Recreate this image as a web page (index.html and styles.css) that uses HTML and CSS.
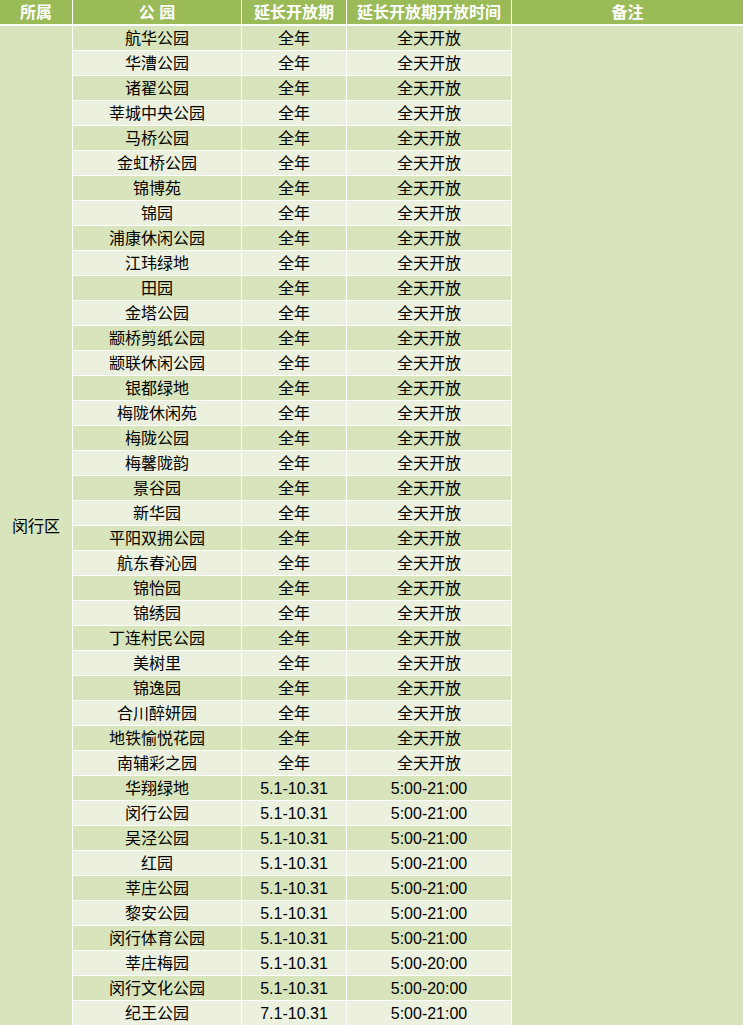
FILE: index.html
```html
<!DOCTYPE html>
<html lang="zh-CN">
<head>
<meta charset="utf-8">
<title>闵行区公园延长开放</title>
<link rel="stylesheet" href="styles.css">
</head>
<body>
<div class="table">
  <div class="th">所属</div>
  <div class="th">公&nbsp;园</div>
  <div class="th">延长开放期</div>
  <div class="th">延长开放期开放时间</div>
  <div class="th">备注</div>
  <div class="district">闵行区</div>
  <div class="note"></div>

  <div class="c d">航华公园</div><div class="c d">全年</div><div class="c d">全天开放</div>
  <div class="c l">华漕公园</div><div class="c l">全年</div><div class="c l">全天开放</div>
  <div class="c d">诸翟公园</div><div class="c d">全年</div><div class="c d">全天开放</div>
  <div class="c l">莘城中央公园</div><div class="c l">全年</div><div class="c l">全天开放</div>
  <div class="c d">马桥公园</div><div class="c d">全年</div><div class="c d">全天开放</div>
  <div class="c l">金虹桥公园</div><div class="c l">全年</div><div class="c l">全天开放</div>
  <div class="c d">锦博苑</div><div class="c d">全年</div><div class="c d">全天开放</div>
  <div class="c l">锦园</div><div class="c l">全年</div><div class="c l">全天开放</div>
  <div class="c d">浦康休闲公园</div><div class="c d">全年</div><div class="c d">全天开放</div>
  <div class="c l">江玮绿地</div><div class="c l">全年</div><div class="c l">全天开放</div>
  <div class="c d">田园</div><div class="c d">全年</div><div class="c d">全天开放</div>
  <div class="c l">金塔公园</div><div class="c l">全年</div><div class="c l">全天开放</div>
  <div class="c d">颛桥剪纸公园</div><div class="c d">全年</div><div class="c d">全天开放</div>
  <div class="c l">颛联休闲公园</div><div class="c l">全年</div><div class="c l">全天开放</div>
  <div class="c d">银都绿地</div><div class="c d">全年</div><div class="c d">全天开放</div>
  <div class="c l">梅陇休闲苑</div><div class="c l">全年</div><div class="c l">全天开放</div>
  <div class="c d">梅陇公园</div><div class="c d">全年</div><div class="c d">全天开放</div>
  <div class="c l">梅馨陇韵</div><div class="c l">全年</div><div class="c l">全天开放</div>
  <div class="c d">景谷园</div><div class="c d">全年</div><div class="c d">全天开放</div>
  <div class="c l">新华园</div><div class="c l">全年</div><div class="c l">全天开放</div>
  <div class="c d">平阳双拥公园</div><div class="c d">全年</div><div class="c d">全天开放</div>
  <div class="c l">航东春沁园</div><div class="c l">全年</div><div class="c l">全天开放</div>
  <div class="c d">锦怡园</div><div class="c d">全年</div><div class="c d">全天开放</div>
  <div class="c l">锦绣园</div><div class="c l">全年</div><div class="c l">全天开放</div>
  <div class="c d">丁连村民公园</div><div class="c d">全年</div><div class="c d">全天开放</div>
  <div class="c l">美树里</div><div class="c l">全年</div><div class="c l">全天开放</div>
  <div class="c d">锦逸园</div><div class="c d">全年</div><div class="c d">全天开放</div>
  <div class="c l">合川醉妍园</div><div class="c l">全年</div><div class="c l">全天开放</div>
  <div class="c d">地铁愉悦花园</div><div class="c d">全年</div><div class="c d">全天开放</div>
  <div class="c l">南辅彩之园</div><div class="c l">全年</div><div class="c l">全天开放</div>
  <div class="c d">华翔绿地</div><div class="c d">5.1-10.31</div><div class="c d">5:00-21:00</div>
  <div class="c l">闵行公园</div><div class="c l">5.1-10.31</div><div class="c l">5:00-21:00</div>
  <div class="c d">吴泾公园</div><div class="c d">5.1-10.31</div><div class="c d">5:00-21:00</div>
  <div class="c l">红园</div><div class="c l">5.1-10.31</div><div class="c l">5:00-21:00</div>
  <div class="c d">莘庄公园</div><div class="c d">5.1-10.31</div><div class="c d">5:00-21:00</div>
  <div class="c l">黎安公园</div><div class="c l">5.1-10.31</div><div class="c l">5:00-21:00</div>
  <div class="c d">闵行体育公园</div><div class="c d">5.1-10.31</div><div class="c d">5:00-21:00</div>
  <div class="c l">莘庄梅园</div><div class="c l">5.1-10.31</div><div class="c l">5:00-20:00</div>
  <div class="c d">闵行文化公园</div><div class="c d">5.1-10.31</div><div class="c d">5:00-20:00</div>
  <div class="c l">纪王公园</div><div class="c l">7.1-10.31</div><div class="c l">5:00-21:00</div>
</div>
</body>
</html>
```

FILE: styles.css
```css
html, body {
  margin: 0;
  padding: 0;
  background: #ffffff;
}

body {
  font-family: "Liberation Sans", "Noto Sans CJK SC", sans-serif;
  font-size: 16px;
  color: #000;
}

.table {
  display: grid;
  width: 743px;
  grid-template-columns: 72px 168px 104px 164px 231px;
  grid-template-rows: 25px repeat(40, 24px);
  gap: 1px;
  background: #ffffff;
}

.th,
.c,
.district,
.note {
  display: flex;
  align-items: center;
  justify-content: center;
  line-height: 1;
  white-space: nowrap;
  box-sizing: border-box;
}

.c,
.district {
  padding-top: 2px;
}

.th {
  height: 24px;
  padding-top: 1px;
  align-self: start;
  background: #9bbb59;
  color: #ffffff;
  font-weight: bold;
}

.district {
  grid-column: 1;
  grid-row: 2 / span 40;
  background: #d8e4bc;
}

.note {
  grid-column: 5;
  grid-row: 2 / span 40;
  background: #d8e4bc;
}

.d {
  background: #d8e4bc;
}

.l {
  background: #ebf1de;
}
```
